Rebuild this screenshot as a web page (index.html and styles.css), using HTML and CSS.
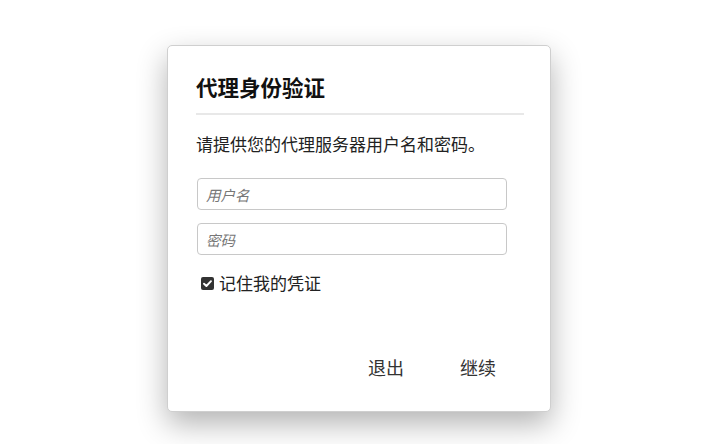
FILE: index.html
```html
<!DOCTYPE html>
<html lang="zh-CN">
<head>
    <meta charset="UTF-8">
    <title>代理身份验证</title>
    <link rel="stylesheet" href="styles.css">
</head>
<body>
<div class="dialog">
    <h1 class="title">代理身份验证</h1>
    <p class="desc">请提供您的代理服务器用户名和密码。</p>
    <input class="field" type="text" placeholder="用户名">
    <input class="field" type="password" placeholder="密码">
    <label class="remember">
        <span class="check">
            <svg width="13" height="13" viewBox="0 0 13 13"><rect x="0" y="0" width="13" height="13" rx="2" fill="#333"/><path d="M3 6.7 L5.4 9 L10 4.2" fill="none" stroke="#fff" stroke-width="1.9" stroke-linecap="round" stroke-linejoin="round"/></svg>
        </span>
        记住我的凭证
    </label>
    <div class="buttons">
        <button class="btn">退出</button>
        <button class="btn">继续</button>
    </div>
</div>
</body>
</html>
```

FILE: styles.css
```css
html,body{margin:0;padding:0;background:#fff;}
body{min-height:444px;overflow:hidden;font-family:"Noto Sans CJK SC","Noto Sans",sans-serif;color:#222;}
.dialog{box-sizing:border-box;width:384px;height:367px;margin:45px 0 0 167px;padding:26px 26px 0 28px;border:1px solid #cfcfcf;border-radius:5px;background:#fff;box-shadow:0 12px 30px rgba(0,0,0,0.3);display:flex;flex-direction:column;}
.title{margin:0;padding-bottom:11px;font-size:21.5px;line-height:30px;font-weight:bold;color:#111;border-bottom:2px solid #e8e8e8;}
.desc{margin:17px 0 0;font-size:17px;line-height:24px;color:#222;}
.field{box-sizing:border-box;width:310px;height:32px;margin:22px 0 0 1px;padding:0 8px;border:1px solid #c8c8c8;border-radius:4px;font-family:inherit;font-size:14.5px;outline:none;}
.field + .field{margin-top:13px;}
.field::placeholder{color:#777;font-style:italic;}
.remember{display:flex;align-items:center;margin:16px 0 0 5px;font-size:17px;line-height:24px;color:#222;}
.check{display:flex;margin-right:5px;}
.buttons{display:flex;justify-content:flex-end;margin-top:auto;margin-bottom:26px;}
.btn{width:92px;height:36px;border:none;background:none;font-family:inherit;font-size:18px;color:#333;padding:0;}
```
